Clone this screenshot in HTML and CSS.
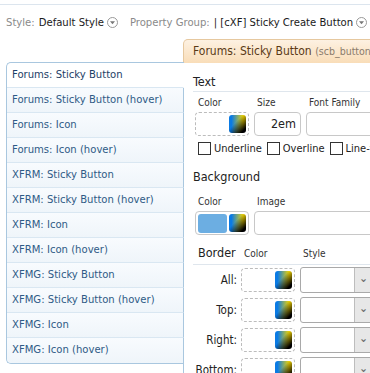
FILE: index.html
```html
<!DOCTYPE html>
<html lang="en">
<head>
    <meta charset="UTF-8">
    <title>Style Properties</title>
    <link rel="stylesheet" href="styles.css">
</head>
<body>
    <div class="topline"></div>

    <div class="toolbar">
        <span class="tb-label">Style:</span>
        <span class="tb-value">Default Style</span>
        <svg class="tb-menu" width="11" height="11" viewBox="0 0 11 11"><circle cx="5.5" cy="5.5" r="5" fill="#fff" stroke="#999"/><path d="M3 4.3h5L5.5 7.2z" fill="#777"/></svg>
        <span class="tb-label tb-gap">Property Group:</span>
        <span class="tb-value">| [cXF] Sticky Create Button</span>
        <svg class="tb-menu" width="11" height="11" viewBox="0 0 11 11"><circle cx="5.5" cy="5.5" r="5" fill="#fff" stroke="#999"/><path d="M3 4.3h5L5.5 7.2z" fill="#777"/></svg>
    </div>

    <div class="tabs">
        <div class="tab">Forums: Sticky Button <span class="tab-id">(scb_button)</span></div>
    </div>

    <div class="editor">
        <ul class="prop-list">
            <li class="selected">Forums: Sticky Button</li>
            <li>Forums: Sticky Button (hover)</li>
            <li>Forums: Icon</li>
            <li>Forums: Icon (hover)</li>
            <li>XFRM: Sticky Button</li>
            <li>XFRM: Sticky Button (hover)</li>
            <li>XFRM: Icon</li>
            <li>XFRM: Icon (hover)</li>
            <li>XFMG: Sticky Button</li>
            <li>XFMG: Sticky Button (hover)</li>
            <li>XFMG: Icon</li>
            <li>XFMG: Icon (hover)</li>
        </ul>

        <div class="panel">
            <h3 class="section-title underlined">Text</h3>
            <div class="fields">
                <div class="field">
                    <label>Color</label>
                    <div class="color-box dashed"><span class="picker"></span></div>
                </div>
                <div class="field">
                    <label>Size</label>
                    <div class="input size-input">2em</div>
                </div>
                <div class="field">
                    <label>Font Family</label>
                    <div class="input wide-input"></div>
                </div>
            </div>
            <div class="checks">
                <label><input type="checkbox"> Underline</label>
                <label><input type="checkbox"> Overline</label>
                <label><input type="checkbox"> Line-through</label>
            </div>

            <h3 class="section-title">Background</h3>
            <div class="fields bg-fields">
                <div class="field">
                    <label>Color</label>
                    <div class="color-box solid"><span class="swatch"></span><span class="picker"></span></div>
                </div>
                <div class="field">
                    <label>Image</label>
                    <div class="input image-input"></div>
                </div>
            </div>

            <div class="border-grid border-head">
                <span class="border-title">Border</span>
                <span class="sub-label">Color</span>
                <span class="sub-label">Style</span>
            </div>
            <div class="border-grid border-rows">
                <span class="row-label">All:</span>
                <div class="color-box dashed"><span class="picker"></span></div>
                <div class="select"><span class="arrow">&#8964;</span></div>

                <span class="row-label">Top:</span>
                <div class="color-box dashed"><span class="picker"></span></div>
                <div class="select"><span class="arrow">&#8964;</span></div>

                <span class="row-label">Right:</span>
                <div class="color-box dashed"><span class="picker"></span></div>
                <div class="select"><span class="arrow">&#8964;</span></div>

                <span class="row-label">Bottom:</span>
                <div class="color-box dashed"><span class="picker"></span></div>
                <div class="select"><span class="arrow">&#8964;</span></div>
            </div>
        </div>
    </div>
</body>
</html>
```

FILE: styles.css
```css
* {
    margin: 0;
    padding: 0;
    box-sizing: border-box;
}

body {
    font-family: "DejaVu Sans Condensed", "DejaVu Sans", sans-serif;
    font-size: 11px;
    color: #222;
    background: #fff;
    width: 370px;
    height: 373px;
    overflow: hidden;
}

.topline {
    height: 5px;
    border-bottom: 1px solid #dce5ee;
}

.toolbar {
    height: 34px;
    display: flex;
    align-items: center;
    padding-left: 6px;
    font-size: 11.2px;
    white-space: nowrap;
}

.tb-label {
    color: #8a8a8a;
    margin-right: 4px;
}

.tb-gap {
    margin-left: 12px;
}

.tb-value {
    color: #1a1a1a;
}

.tb-menu {
    margin-left: 3px;
}

.tabs {
    height: 24px;
    padding-left: 183px;
    display: flex;
}

.tab {
    flex: none;
    width: 240px;
    height: 24px;
    padding: 0 9px;
    border: 1px solid #e6c89f;
    border-bottom: none;
    border-top-left-radius: 5px;
    background: linear-gradient(to bottom, #fdf1e2, #f9ddb8);
    color: #5a3a16;
    font-size: 12px;
    line-height: 23px;
    white-space: nowrap;
    overflow: hidden;
}

.tab-id {
    color: #8a7b6b;
    font-size: 10.5px;
}

.editor {
    display: grid;
    grid-template-columns: 177px 200px;
    padding-left: 6px;
    margin-top: -1px;
}

.prop-list {
    list-style: none;
    position: relative;
    z-index: 1;
    margin-right: -1px;
    border: 1px solid #a9c7df;
    border-right: none;
    border-radius: 5px 0 0 5px;
    background: #f3f8fc;
    align-self: start;
}

.prop-list li {
    height: 25px;
    padding-left: 5px;
    font-size: 11.2px;
    line-height: 24px;
    color: #2f5b86;
    border-bottom: 1px solid #d9e7f2;
    border-right: 1px solid #a9c7df;
    background: linear-gradient(to bottom, #f8fbfe, #eff5fa);
    white-space: nowrap;
}

.prop-list li:first-child {
    border-top-left-radius: 5px;
}

.prop-list li:last-child {
    border-bottom: none;
    border-bottom-left-radius: 5px;
}

.prop-list li.selected {
    background: #fff;
    border-right-color: #fff;
    color: #1d3e66;
}

.panel {
    border-left: 1px solid #a9c7df;
    padding: 12px 0 0 9px;
    height: 320px;
    white-space: nowrap;
}

.section-title {
    font-size: 12.5px;
    font-weight: normal;
    line-height: 16px;
    color: #222;
}

.section-title.underlined {
    padding-bottom: 1px;
    border-bottom: 1px solid #dfe6ed;
}

.fields {
    display: flex;
    gap: 5px;
    padding-left: 2px;
    margin-top: 5px;
}

.bg-fields {
    margin-top: 11px;
}

.field {
    display: flex;
    flex-direction: column;
    gap: 3px;
}

.field label {
    font-size: 10px;
    line-height: 12px;
    padding-left: 3px;
    color: #333;
}

.color-box {
    width: 54px;
    height: 24px;
    border-radius: 4px;
    display: flex;
    align-items: center;
    justify-content: flex-end;
    padding-right: 2px;
    gap: 2px;
}

.color-box.dashed {
    border: 1px dashed #bcbcbc;
}

.color-box.solid {
    border: 1px solid #c8c8c8;
}

.swatch {
    flex: 1;
    height: 19px;
    margin-left: 2px;
    border-radius: 3px;
    background: #6caee2;
}

.picker {
    width: 17px;
    height: 18px;
    border-radius: 3px;
    background:
        linear-gradient(to bottom right, rgba(0, 0, 0, 0) 40%, #000 85%),
        linear-gradient(to right, #0b7be4 15%, #f4d500 85%);
}

.input {
    height: 24px;
    border: 1px solid #c8c8c8;
    border-radius: 4px;
    background: #fff;
}

.size-input {
    width: 47px;
    font-size: 12.5px;
    line-height: 22px;
    text-align: right;
    padding-right: 4px;
}

.wide-input {
    width: 90px;
}

.image-input {
    width: 140px;
}

.checks {
    display: flex;
    margin-top: 6px;
    padding-left: 5px;
    height: 13px;
}

.checks label {
    display: flex;
    align-items: center;
    gap: 3px;
    margin-right: 5px;
    line-height: 13px;
    color: #222;
}

.checks input {
    appearance: none;
    width: 13px;
    height: 13px;
    border: 1px solid #333;
    background: #fff;
    margin: 0;
}

.checks + .section-title {
    margin-top: 14px;
}

.border-grid {
    display: grid;
    grid-template-columns: 44px 55px 73px;
    column-gap: 4px;
    align-items: center;
}

.border-head {
    margin-top: 10px;
    padding-bottom: 3px;
    border-bottom: 1px solid #dfe6ed;
    margin-bottom: 2px;
}

.border-rows {
    row-gap: 4px;
}

.border-title {
    font-size: 12.5px;
    line-height: 16px;
    padding-left: 5px;
}

.sub-label {
    font-size: 10px;
    padding-left: 3px;
    color: #333;
}

.row-label {
    text-align: right;
    font-size: 11.5px;
    color: #222;
}

.select {
    height: 26px;
    border: 1px solid #a9a9a9;
    border-radius: 3px;
    background: #fff;
    display: flex;
    justify-content: flex-end;
}

.arrow {
    width: 18px;
    background: #e7e7e7;
    border-left: 1px solid #bdbdbd;
    color: #666;
    font-size: 12px;
    line-height: 20px;
    text-align: center;
}
```
